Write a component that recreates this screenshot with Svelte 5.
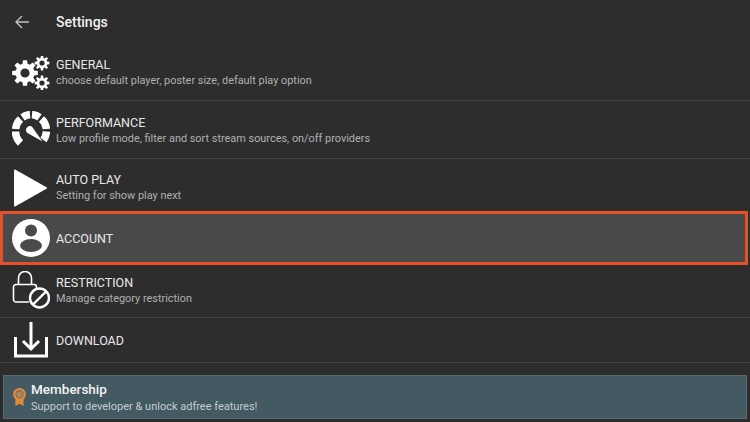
<script>
	// builds a toothed gear outline around 0,0
	function gear(teeth, outer, inner) {
		const step = (Math.PI * 2) / teeth;
		let d = '';
		for (let i = 0; i < teeth; i++) {
			const a = i * step;
			const pts = [
				[inner, a - step * 0.34],
				[outer, a - step * 0.2],
				[outer, a + step * 0.2],
				[inner, a + step * 0.34]
			];
			pts.forEach(([r, t], j) => {
				d += `${i === 0 && j === 0 ? 'M' : 'L'}${(r * Math.cos(t)).toFixed(2)} ${(r * Math.sin(t)).toFixed(2)}`;
			});
		}
		return d + 'Z';
	}

	const rows = [
		{ icon: 'general', title: 'GENERAL', sub: 'choose default player, poster size, default play option', h: 59, top: 3 },
		{ icon: 'performance', title: 'PERFORMANCE', sub: 'Low profile mode, filter and sort stream sources, on/off providers', h: 58, top: 1 },
		{ icon: 'play', title: 'AUTO PLAY', sub: 'Setting for show play next', h: 52, top: 5 },
		{ icon: 'account', title: 'ACCOUNT', active: true, h: 54 },
		{ icon: 'restriction', title: 'RESTRICTION', sub: 'Manage category restriction', h: 53, bottom: 2 },
		{ icon: 'download', title: 'DOWNLOAD', h: 45 }
	];
</script>

<div class="screen">
	<header class="topbar">
		<svg class="back" viewBox="0 0 16 16" width="16" height="16">
			<path d="M15 8H2M8 2 2 8l6 6" fill="none" stroke="#c4c4c4" stroke-width="1.3" />
		</svg>
		<h1>Settings</h1>
	</header>

	<ul class="list">
		{#each rows as row}
			<li
				class="row {row.active ? 'active' : ''}"
				style="height: {row.h}px; padding-top: {row.top ?? 0}px; padding-bottom: {row.bottom ?? 0}px"
			>
				<span class="icon">
					{#if row.icon === 'general'}
						<svg viewBox="0 0 38 34" width="38" height="34">
							<g fill="#fff">
								<path transform="translate(13 17)" fill-rule="evenodd" d="{gear(8, 13, 9.5)}M4.6 0A4.6 4.6 0 1 0 -4.6 0A4.6 4.6 0 1 0 4.6 0Z" />
								<path transform="translate(30 7)" fill-rule="evenodd" d="{gear(8, 7.500, 5.300)}M2.600 0A2.600 2.600 0 1 0 -2.600 0A2.600 2.600 0 1 0 2.600 0Z" />
								<path transform="translate(30 27)" fill-rule="evenodd" d="{gear(8, 7.500, 5.300)}M2.600 0A2.600 2.600 0 1 0 -2.600 0A2.600 2.600 0 1 0 2.600 0Z" />
							</g>
						</svg>
					{:else if row.icon === 'performance'}
						<svg viewBox="0 0 38 38" width="38" height="38">
							<g fill="none" stroke="#fff" stroke-width="7.500">
								<path d="M8.500 32A15.500 15.500 0 0 1 3.600 20.500" />
								<path d="M3.600 18A15.500 15.500 0 0 1 8.500 8" />
								<path d="M10.500 6.300A15.500 15.500 0 0 1 18 3.600" />
								<path d="M20 3.600A15.500 15.500 0 0 1 27.500 6.300" />
								<path d="M29.500 8A15.500 15.500 0 0 1 34.400 18" />
								<path d="M34.400 20.500A15.500 15.500 0 0 1 31.500 29" />
							</g>
							<path d="M15 16.500a3.600 3.600 0 0 1 5.200-.6L30.500 30.500 15.500 22a3.600 3.600 0 0 1-.5-5.500Z" fill="#fff" />
						</svg>
					{:else if row.icon === 'play'}
						<svg viewBox="0 0 36 38" width="36" height="38">
							<path d="M3 1.500 34 19 3 36.500Z" fill="#fff" stroke="#fff" stroke-width="2" stroke-linejoin="round" />
						</svg>
					{:else if row.icon === 'account'}
						<svg viewBox="0 0 38 38" width="38" height="38">
							<circle cx="19" cy="19" r="19" fill="#fff" />
							<circle cx="19" cy="11.500" r="6" fill="#4a4a4a" />
							<ellipse cx="19" cy="26.500" rx="11" ry="6.500" fill="#4a4a4a" />
						</svg>
					{:else if row.icon === 'restriction'}
						<svg viewBox="0 0 38 38" width="38" height="38">
							<g fill="none" stroke="#fff">
								<path d="M17 31H4a2.500 2.500 0 0 1-2.500-2.500V16A2.500 2.500 0 0 1 4 13.500h18a2.500 2.500 0 0 1 2.500 2.500v3" stroke-width="1.600" />
								<path d="M6.500 13.500V7a6.500 6.500 0 0 1 13 0v6.500" stroke-width="1.600" />
								<circle cx="27.500" cy="27" r="9.500" stroke-width="2.400" />
								<path d="M21 33.500 34 20.500" stroke-width="2.400" />
							</g>
						</svg>
					{:else if row.icon === 'download'}
						<svg viewBox="0 0 38 36" width="38" height="36">
							<g fill="none" stroke="#fff" stroke-width="3">
								<path d="M3.500 15v19h31V15" />
								<path d="M19 0v27M11 19l8 8 8-8" />
							</g>
						</svg>
					{/if}
				</span>
				<div class="labels">
					<span class="title">{row.title}</span>
					{#if row.sub}<span class="sub">{row.sub}</span>{/if}
				</div>
			</li>
		{/each}
	</ul>

	<div class="membership">
		<svg viewBox="0 0 16 22" width="15" height="20">
			<path d="M3.500 12 3.500 21 8 18.500 12.500 21 12.500 12Z" fill="#e08a3c" />
			<circle cx="8" cy="8" r="7" fill="#e08a3c" />
			<circle cx="8" cy="8" r="4" fill="#a9865f" stroke="#8a6a4a" stroke-width="1.200" />
		</svg>
		<div class="labels member">
			<span class="m-title">Membership</span>
			<span class="m-sub">Support to developer &amp; unlock adfree features!</span>
		</div>
	</div>
</div>

<style>
	:global(body) {
		margin: 0;
		background: #2d2d2d;
	}
	.screen {
		width: 750px;
		height: 422px;
		overflow: hidden;
		background: #2d2d2d;
		font-family: Roboto, "Liberation Sans", sans-serif;
		color: #f2f2f2;
	}
	.topbar {
		height: 42px;
		display: flex;
		align-items: center;
		padding: 1px 0 0 14px;
		gap: 26px;
		box-sizing: border-box;
	}
	.topbar h1 {
		margin: 0;
		font-size: 14px;
		font-weight: 500;
		color: #f0f0f0;
	}
	.list {
		list-style: none;
		margin: 0;
		padding: 0;
		height: 333px;
	}
	.row {
		box-sizing: border-box;
		display: flex;
		align-items: center;
		border-bottom: 1px solid #454545;
	}
	.row:nth-child(3) {
		border-bottom: none;
	}
	.row.active {
		background: #494949;
		border: 3px solid #e8502a;
		margin-right: 2px;
	}
	.row.active .icon {
		margin-left: -3px;
	}
	.icon {
		width: 56px;
		flex: none;
		box-sizing: border-box;
		padding-left: 12px;
		display: flex;
	}
	.icon svg {
		display: block;
	}
	.labels {
		display: flex;
		flex-direction: column;
		gap: 2px;
	}
	.labels.member {
		gap: 3px;
	}
	.title {
		font-size: 12.500px;
		line-height: 15px;
		color: #e8e8e8;
	}
	.sub {
		font-size: 10.900px;
		line-height: 14px;
		color: #b0b0b0;
	}
	.membership {
		box-sizing: border-box;
		height: 44px;
		margin: 0 3px;
		display: flex;
		align-items: center;
		gap: 4px;
		padding-left: 8px;
		background: #445a63;
		border: 1px solid #58686e;
	}
	.m-title {
		font-size: 13.500px;
		font-weight: 500;
		line-height: 16px;
		color: #f2f2f2;
	}
	.m-sub {
		font-size: 11px;
		line-height: 13px;
		color: #c2ccd0;
	}
</style>
